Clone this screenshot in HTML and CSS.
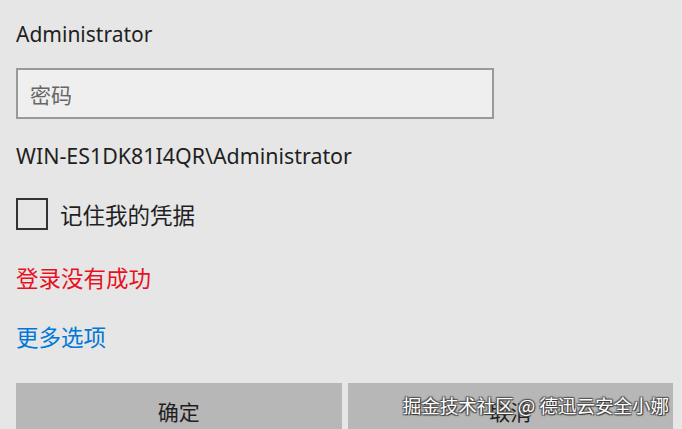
FILE: index.html
```html
<!DOCTYPE html>
<html>
<head>
<meta charset="utf-8">
<link rel="stylesheet" href="styles.css">
</head>
<body>
<div class="dialog">
  <div class="user">Administrator</div>
  <div class="input"><span class="placeholder">密码</span></div>
  <div class="domain">WIN-ES1DK81I4QR\Administrator</div>
  <div class="remember"><span class="box"></span><span class="label">记住我的凭据</span></div>
  <div class="error">登录没有成功</div>
  <div class="more">更多选项</div>
  <div class="buttons">
    <div class="btn">确定</div>
    <div class="btn">取消</div>
  </div>
</div>
<div class="watermark">掘金技术社区 @ 德迅云安全小娜</div>
</body>
</html>
```
FILE: styles.css
```css
html, body {
  margin: 0;
  padding: 0;
  background: #e6e6e6;
  width: 682px;
  height: 429px;
  overflow: hidden;
  position: relative;
  font-family: "Noto Sans", "Noto Sans CJK SC", sans-serif;
  color: #1f1f1f;
}
.dialog {
  padding: 20px 9px 0 16px;
  display: flex;
  flex-direction: column;
}
.user {
  font-size: 21px;
  line-height: 28px;
}
.input {
  margin-top: 20px;
  width: 462px;
  height: 47px;
  border: 2px solid #999;
  background: #efefef;
  display: flex;
  align-items: center;
  padding-left: 12px;
  box-sizing: content-box;
}
.placeholder {
  font-family: "Noto Sans CJK SC", sans-serif;
  font-size: 21px;
  color: #666;
}
.domain {
  margin-top: 23px;
  font-size: 21.4px;
  line-height: 28px;
}
.remember {
  margin-top: 28px;
  display: flex;
  align-items: center;
  height: 32px;
}
.box {
  width: 28px;
  height: 28px;
  border: 2px solid #333;
}
.label {
  margin-left: 12px;
  font-family: "Noto Sans CJK SC", sans-serif;
  font-size: 22.5px;
}
.error {
  margin-top: 32px;
  font-family: "Noto Sans CJK SC", sans-serif;
  font-size: 22.5px;
  line-height: 30px;
  color: #e81123;
}
.more {
  margin-top: 29px;
  font-family: "Noto Sans CJK SC", sans-serif;
  font-size: 22.5px;
  line-height: 30px;
  color: #0078d7;
}
.buttons {
  margin-top: 32px;
  display: flex;
  gap: 6px;
}
.btn {
  flex: 1;
  height: 54px;
  background: #b7b7b7;
  border: 2px solid #b7b7b7;
  box-sizing: border-box;
  display: flex;
  justify-content: center;
  padding-top: 11px;
  font-family: "Noto Sans CJK SC", sans-serif;
  font-size: 21px;
  color: #1f1f1f;
}
.watermark {
  position: absolute;
  right: 13px;
  top: 392px;
  font-family: "Noto Sans CJK SC", sans-serif;
  font-size: 18.5px;
  line-height: 26px;
  color: #fff;
  text-shadow: 1px 1px 1px #333, -1px -1px 1px #555, 1px -1px 1px #555, -1px 1px 1px #555;
}
```
